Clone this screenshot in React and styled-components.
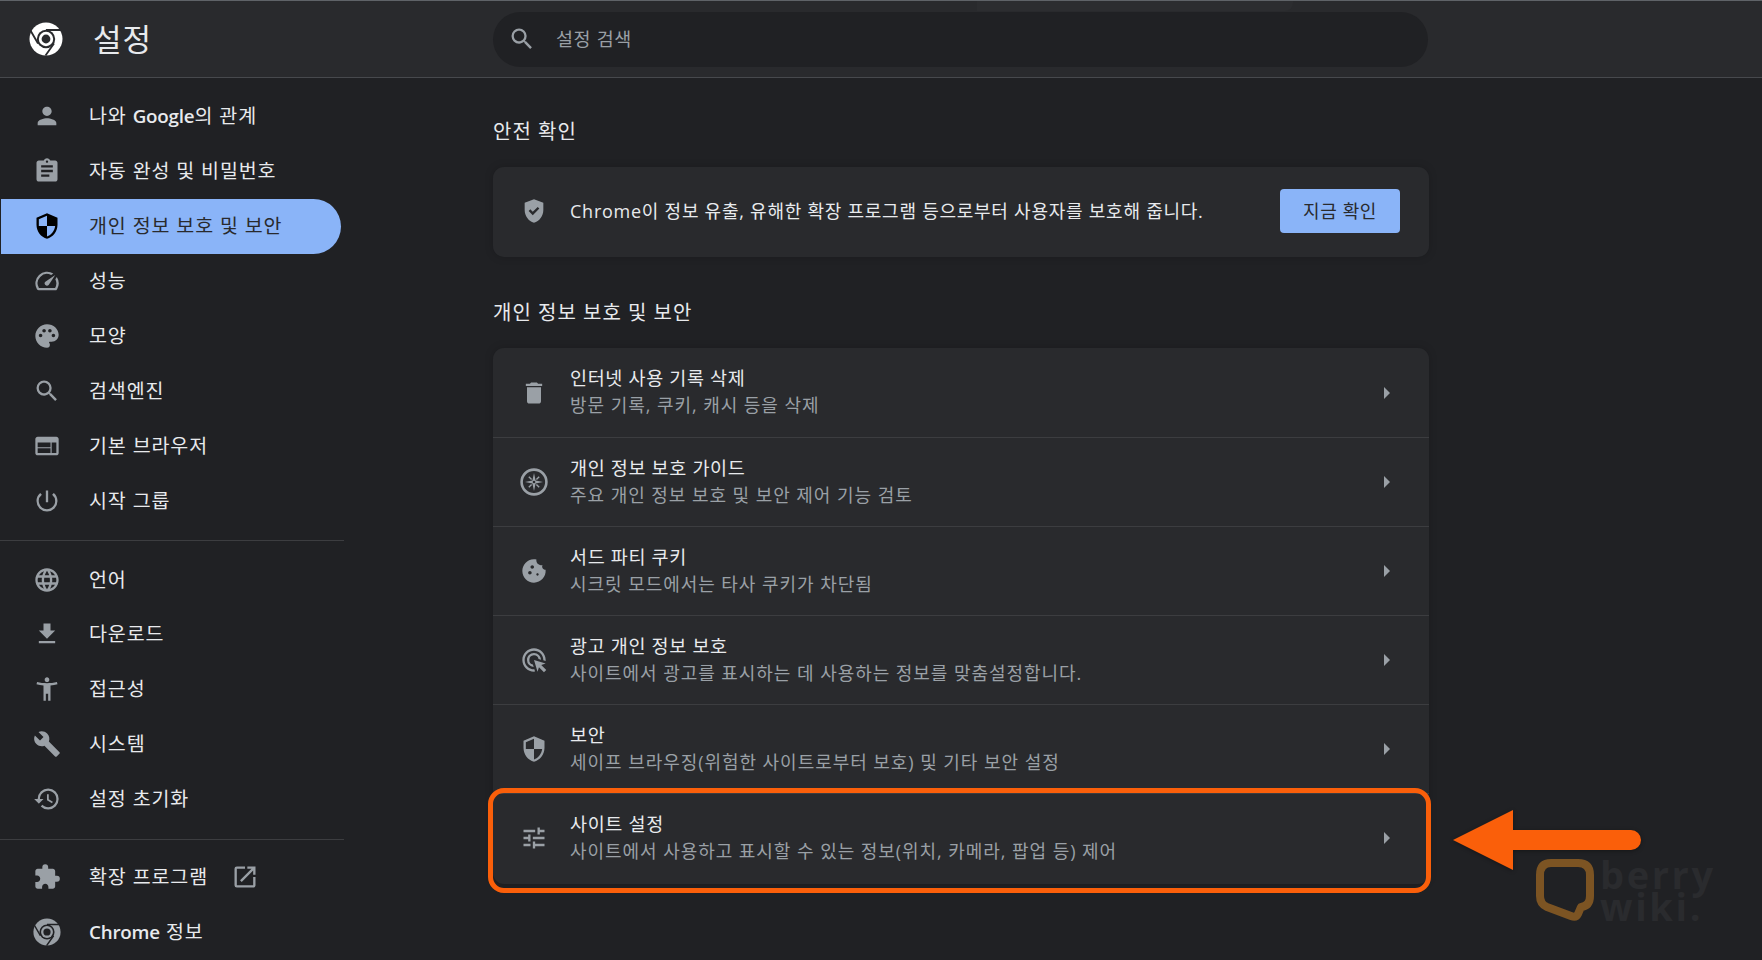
import React from 'react';
import styled, { createGlobalStyle } from 'styled-components';
import {
  MdPerson,
  MdAssignment,
  MdSecurity,
  MdSpeed,
  MdPalette,
  MdSearch,
  MdWeb,
  MdPowerSettingsNew,
  MdLanguage,
  MdFileDownload,
  MdAccessibilityNew,
  MdBuild,
  MdRestore,
  MdExtension,
  MdOpenInNew,
  MdDelete,
  MdCookie,
  MdAdsClick,
  MdTune,
  MdGppGood,
} from 'react-icons/md';

const GlobalStyle = createGlobalStyle`
  html, body {
    margin: 0;
    padding: 0;
    background: #202124;
  }
  * {
    box-sizing: border-box;
  }
`;

const Page = styled.div`
  position: relative;
  width: 1762px;
  height: 960px;
  overflow: hidden;
  background: #202124;
  color: #e8eaed;
  font-family: 'Open Sans', 'Noto Sans CJK KR', sans-serif;
`;

const Header = styled.header`
  display: flex;
  align-items: center;
  height: 78px;
  padding-right: 334px;
  background: #292a2d;
  border-top: 1px solid #5f6368;
  border-bottom: 1px solid #47494d;
`;

const TabGhost = styled.div`
  position: absolute;
  left: 977px;
  top: 1px;
  width: 316px;
  height: 10px;
  border-radius: 0 0 8px 0;
  background: #2c2d30;
`;

const Brand = styled.div`
  display: flex;
  align-items: center;
  gap: 30px;
  width: 493px;
  padding-left: 29px;
`;

const Title = styled.h1`
  margin: 0 0 1px;
  font-size: 31px;
  font-weight: 400;
  line-height: 40px;
  letter-spacing: 1px;
`;

const SearchBox = styled.div`
  display: flex;
  align-items: center;
  gap: 20px;
  flex: 1;
  height: 55px;
  padding-left: 15px;
  border-radius: 28px;
  background: #202124;
  color: #9aa0a6;
  font-size: 18.5px;
  letter-spacing: 0.6px;
`;

const SearchLabel = styled.span`
  margin-bottom: 3px;
`;

const Body = styled.div`
  display: grid;
  grid-template-columns: 344px 936px;
  gap: 149px;
`;

const Sidebar = styled.nav`
  padding-top: 11px;
`;

const NavGroup = styled.div`
  padding: ${(props) => props.$padding};
  border-bottom: ${(props) => (props.$last ? 'none' : '1px solid #3c3d40')};
`;

const NavItem = styled.a`
  display: flex;
  align-items: center;
  gap: 28px;
  width: 340px;
  height: 54.9px;
  margin-left: 1px;
  padding-left: 32px;
  border-radius: 0 28px 28px 0;
  background: ${(props) => (props.$active ? '#8ab4f8' : 'transparent')};
  color: ${(props) => (props.$active ? '#292a2d' : '#e8eaed')};
  font-size: 19.5px;
  letter-spacing: 0.9px;
  white-space: nowrap;

  svg {
    color: ${(props) => (props.$active ? '#000' : '#9aa0a6')};
  }
`;

const NavIcon = styled.span`
  display: flex;
  flex: none;
  width: 28px;
  height: 28px;
  align-items: center;
  justify-content: center;
`;

const NavLabel = styled.span`
  margin-bottom: 3px;
`;

const Strong = styled.b`
  font-size: 18.8px;
  font-weight: 600;
  letter-spacing: -0.2px;
`;

const External = styled.span`
  display: flex;
  margin-left: -5px;
`;

const Content = styled.main`
  padding-top: 20px;
`;

const SectionTitle = styled.h2`
  margin: 0;
  height: 69px;
  padding-top: 17px;
  font-size: 20px;
  font-weight: 400;
  line-height: 34px;
  letter-spacing: 1px;
`;

const Card = styled.section`
  margin-bottom: 22px;
  padding-bottom: ${(props) => props.$bottom || 0}px;
  border-radius: 11px;
  background: #292a2d;
  box-shadow: 0 0 8px rgba(0, 0, 0, 0.18);
`;

const SafetyRow = styled.div`
  display: flex;
  align-items: center;
  height: 90px;
  padding: 0 29px 2px 27px;
  font-size: 18px;
  letter-spacing: 0.75px;
`;

const RowIcon = styled.span`
  display: flex;
  flex: none;
  width: 28px;
  height: 28px;
  margin-right: 22px;
  align-items: center;
  justify-content: center;
  color: #9aa0a6;
`;

const SafetyText = styled.span`
  flex: 1;
  margin-bottom: 3px;
  white-space: nowrap;
`;

const Button = styled.button`
  width: 120px;
  height: 44px;
  padding: 0 0 3px;
  border: none;
  border-radius: 4px;
  background: #8ab4f8;
  color: #292a2d;
  font-family: inherit;
  font-size: 18px;
  letter-spacing: 0.6px;
`;

const Row = styled.div`
  display: flex;
  align-items: center;
  height: 89px;
  padding: 0 39px 0 27px;
  border-top: ${(props) => (props.$first ? 'none' : '1px solid #3c3d40')};
`;

const RowText = styled.div`
  flex: 1;
  display: flex;
  flex-direction: column;
  gap: 1px;
  margin-bottom: 2px;
`;

const RowTitle = styled.div`
  font-size: 18.5px;
  line-height: 27px;
  letter-spacing: 0.65px;
`;

const RowSub = styled.div`
  color: #9aa0a6;
  font-size: 18px;
  line-height: 27px;
  letter-spacing: 0.95px;
`;

const Chevron = styled.span`
  width: 0;
  height: 0;
  border-top: 6px solid transparent;
  border-bottom: 6px solid transparent;
  border-left: 6px solid #9aa0a6;
`;

const Highlight = styled.div`
  position: absolute;
  left: 488px;
  top: 788px;
  width: 943px;
  height: 105px;
  border: 5px solid #fa5f0a;
  border-radius: 16px;
`;

const ArrowMark = styled.svg`
  position: absolute;
  left: 1450px;
  top: 805px;
  filter: drop-shadow(0 1px 2px rgba(0, 0, 0, 0.35));
`;

const Watermark = styled.div`
  position: absolute;
  left: 1535px;
  top: 858px;
  display: flex;
  gap: 5px;
`;

const WatermarkText = styled.div`
  color: #2a2b2e;
  font-family: 'Open Sans', sans-serif;
  font-size: 38px;
  font-weight: 700;
  line-height: 32px;
  letter-spacing: 2.6px;
`;

function ChromeLogo({ size, color, hole }) {
  return (
    <svg width={size} height={size} viewBox="0 0 34 34">
      <circle cx="17" cy="17" r="16.5" fill={color} />
      <circle cx="17" cy="17" r="9.2" fill={hole} />
      <circle cx="17" cy="17" r="7.2" fill={color} />
      <circle cx="17" cy="17" r="4.4" fill={hole} />
      <path d="M17 8H33M9 21.5L1.5 8.5M25 21.5L16.5 33.5" stroke={hole} strokeWidth="1.8" fill="none" />
    </svg>
  );
}

function CompassIcon({ size }) {
  return (
    <svg width={size} height={size} viewBox="0 0 28 28">
      <circle cx="14" cy="14" r="12.4" fill="none" stroke="currentColor" strokeWidth="2.6" />
      <path d="M14 5l1.6 7.4 7.4 1.6-7.4 1.6-1.6 7.4-1.6-7.4-7.4-1.6 7.4-1.6z" fill="currentColor" />
      <path d="M8.8 8.8l2.8 2.8M19.2 8.8l-2.8 2.8M8.8 19.2l2.8-2.8M19.2 19.2l-2.8-2.8" stroke="currentColor" strokeWidth="1.4" />
      <circle cx="14" cy="14" r="1.3" fill="#292a2d" />
    </svg>
  );
}

const firstNav = [
  { icon: MdPerson, label: <>나와 <Strong>Google</Strong>의 관계</> },
  { icon: MdAssignment, label: '자동 완성 및 비밀번호' },
  { icon: MdSecurity, label: '개인 정보 보호 및 보안', active: true },
  { icon: MdSpeed, label: '성능' },
  { icon: MdPalette, label: '모양' },
  { icon: MdSearch, label: '검색엔진' },
  { icon: MdWeb, label: '기본 브라우저' },
  { icon: MdPowerSettingsNew, label: '시작 그룹' },
];

const secondNav = [
  { icon: MdLanguage, label: '언어' },
  { icon: MdFileDownload, label: '다운로드' },
  { icon: MdAccessibilityNew, label: '접근성' },
  { icon: MdBuild, label: '시스템' },
  { icon: MdRestore, label: '설정 초기화' },
];

const rows = [
  { icon: <MdDelete size={30} />, title: '인터넷 사용 기록 삭제', sub: '방문 기록, 쿠키, 캐시 등을 삭제' },
  { icon: <CompassIcon size={28} />, title: '개인 정보 보호 가이드', sub: '주요 개인 정보 보호 및 보안 제어 기능 검토' },
  { icon: <MdCookie size={28} />, title: '서드 파티 쿠키', sub: '시크릿 모드에서는 타사 쿠키가 차단됨' },
  { icon: <MdAdsClick size={28} />, title: '광고 개인 정보 보호', sub: '사이트에서 광고를 표시하는 데 사용하는 정보를 맞춤설정합니다.' },
  { icon: <MdSecurity size={30} />, title: '보안', sub: '세이프 브라우징(위험한 사이트로부터 보호) 및 기타 보안 설정' },
  { icon: <MdTune size={28} />, title: '사이트 설정', sub: '사이트에서 사용하고 표시할 수 있는 정보(위치, 카메라, 팝업 등) 제어' },
];

function NavEntry({ icon: Icon, label, active }) {
  return (
    <NavItem $active={active}>
      <NavIcon>
        <Icon size={28} />
      </NavIcon>
      <NavLabel>{label}</NavLabel>
    </NavItem>
  );
}

export default function App() {
  return (
    <Page>
      <GlobalStyle />
      <Header>
        <Brand>
          <ChromeLogo size={34} color="#fff" hole="#292a2d" />
          <Title>설정</Title>
        </Brand>
        <SearchBox>
          <MdSearch size={28} />
          <SearchLabel>설정 검색</SearchLabel>
        </SearchBox>
      </Header>
      <TabGhost />
      <Body>
        <Sidebar>
          <NavGroup $padding="0 0 12px">
            {firstNav.map((item, i) => (
              <NavEntry key={i} {...item} />
            ))}
          </NavGroup>
          <NavGroup $padding="11px 0 12px">
            {secondNav.map((item, i) => (
              <NavEntry key={i} {...item} />
            ))}
          </NavGroup>
          <NavGroup $padding="10px 0 0" $last>
            <NavItem>
              <NavIcon>
                <MdExtension size={28} />
              </NavIcon>
              <NavLabel>확장 프로그램</NavLabel>
              <External>
                <MdOpenInNew size={28} />
              </External>
            </NavItem>
            <NavItem>
              <NavIcon>
                <ChromeLogo size={28} color="#9aa0a6" hole="#202124" />
              </NavIcon>
              <NavLabel>
                <Strong>Chrome</Strong> 정보
              </NavLabel>
            </NavItem>
          </NavGroup>
        </Sidebar>
        <Content>
          <SectionTitle>안전 확인</SectionTitle>
          <Card>
            <SafetyRow>
              <RowIcon>
                <MdGppGood size={30} />
              </RowIcon>
              <SafetyText>Chrome이 정보 유출, 유해한 확장 프로그램 등으로부터 사용자를 보호해 줍니다.</SafetyText>
              <Button>지금 확인</Button>
            </SafetyRow>
          </Card>
          <SectionTitle>개인 정보 보호 및 보안</SectionTitle>
          <Card $bottom={2}>
            {rows.map((row, i) => (
              <Row key={row.title} $first={i === 0}>
                <RowIcon>{row.icon}</RowIcon>
                <RowText>
                  <RowTitle>{row.title}</RowTitle>
                  <RowSub>{row.sub}</RowSub>
                </RowText>
                <Chevron />
              </Row>
            ))}
          </Card>
        </Content>
      </Body>
      <Highlight />
      <ArrowMark width="196" height="70" viewBox="0 0 196 70">
        <path d="M3 35L63 5V25H181a10 10 0 0 1 0 20H63V65Z" fill="#fa5f0a" />
      </ArrowMark>
      <Watermark>
        <svg width="60" height="64" viewBox="0 0 60 64">
          <path
            d="M16 5H43Q55 5 55 17V38Q55 48 46 49L43 56Q41 60 36 58L12 49Q5 46 5 38V17Q5 5 16 5Z"
            fill="none"
            stroke="#7c5423"
            strokeWidth="8"
            strokeLinejoin="round"
          />
        </svg>
        <WatermarkText>
          berry
          <br />
          wiki.
        </WatermarkText>
      </Watermark>
    </Page>
  );
}
